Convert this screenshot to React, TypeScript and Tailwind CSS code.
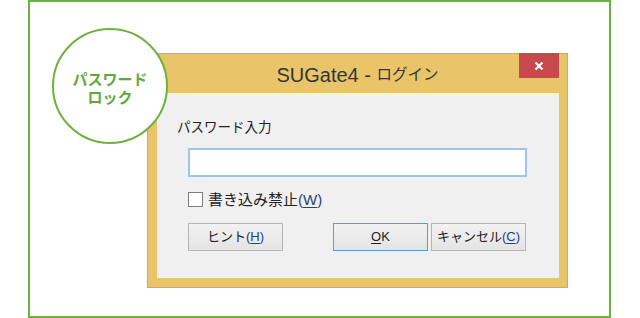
const jp = "font-['Liberation_Sans','Noto_Sans_CJK_JP',sans-serif]";

const Key = ({ k }: { k: string }) => (
  <span className="text-[#27407a]">
    (<span className="underline underline-offset-2">{k}</span>)
  </span>
);

const Button = ({
  children,
  primary,
}: {
  children: React.ReactNode;
  primary?: boolean;
}) => (
  <button
    className={
      "flex h-[28px] w-[95px] items-center justify-center border bg-gradient-to-b from-[#f2f2f2] to-[#e4e4e4] text-[13px] text-[#222] " +
      (primary ? "border-[#5c9ad8]" : "border-[#b4b4b4]")
    }
  >
    {children}
  </button>
);

export default function App() {
  return (
    <div className={`relative h-[318px] w-[640px] overflow-hidden bg-white pl-[28px] ${jp}`}>
      <div className="h-[318px] w-[583px] border-2 border-[#6db140] pl-[117px] pt-[51px]">
        {/* dialog */}
        <div className="flex h-[235px] w-[421px] flex-col border border-[#cfab58] bg-[#e9c469]">
          <div className="grid h-[39px] grid-cols-[1fr_auto_1fr]">
            <div />
            <div className="flex items-center whitespace-nowrap pt-[2px] text-[#353535]">
              <span className="text-[20px] leading-none">SUGate4 -&nbsp;</span>
              <span className="text-[15.5px] leading-none">ログイン</span>
            </div>
            <div className="flex justify-end pr-[8px]">
              <div className="-mt-px flex h-[25px] w-[40px] items-center justify-center bg-[#c7494b]">
                <svg width="10" height="10" viewBox="0 0 10 10">
                  <path d="M1.5 1.5 L8.5 8.5 M8.5 1.5 L1.5 8.5" stroke="#fff" strokeWidth="2.2" />
                </svg>
              </div>
            </div>
          </div>
          <div className="ml-[9px] mr-[8px] h-[185px] bg-[#f0f0f0] pt-[25px]">
            <div className="ml-[20px] text-[13.5px] leading-[20px] text-[#222]">パスワード入力</div>
            <div className="ml-[31px] mt-[10px] h-[29px] w-[339px] border-2 border-[#9dc4ec] bg-white" />
            <div className="ml-[31px] mt-[15px] flex h-[15px] items-center gap-[5px] text-[15px] text-[#222]">
              <div className="h-[15px] w-[15px] border border-[#7d7d7d] bg-white" />
              <span className="leading-none">
                書き込み禁止<Key k="W" />
              </span>
            </div>
            <div className="ml-[31px] mt-[16px] flex w-[339px] justify-between pr-px">
              <Button>
                ヒント<Key k="H" />
              </Button>
              <div className="flex gap-[3px]">
                <Button primary>
                  <span>
                    <span className="underline underline-offset-2">O</span>K
                  </span>
                </Button>
                <Button>
                  キャンセル<Key k="C" />
                </Button>
              </div>
            </div>
          </div>
        </div>
      </div>

      {/* badge circle overlapping the dialog */}
      <div className="absolute left-[52px] top-[28px] flex h-[116px] w-[116px] flex-col items-center justify-center rounded-full border-2 border-[#6db140] bg-white pt-[6px] text-[15px] font-bold leading-[18px] text-[#62a83a]">
        <span>パスワード</span>
        <span>ロック</span>
      </div>
    </div>
  );
}
